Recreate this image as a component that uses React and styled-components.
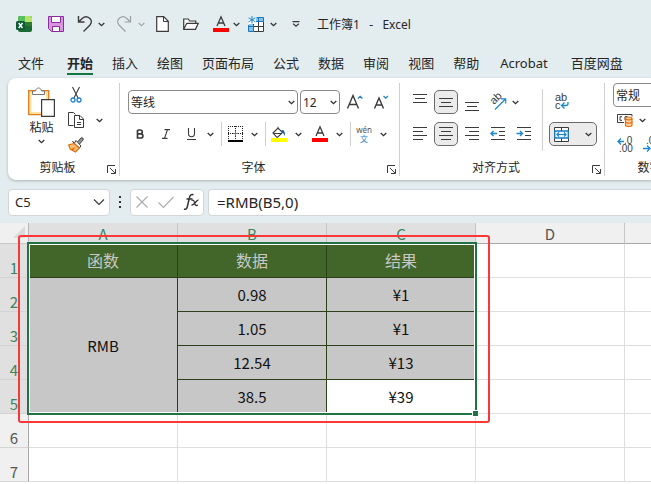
import React from "react";
import styled, { createGlobalStyle, css } from "styled-components";

const GlobalStyle = createGlobalStyle`
  * { box-sizing: border-box; }
  body {
    margin: 0;
    overflow: hidden;
    background: #e3ecef;
    color: #262626;
    font-family: "Noto Sans", "Noto Sans CJK SC", sans-serif;
    font-size: 12px;
  }
  button, input, select { font: inherit; color: inherit; }
  svg { display: block; flex: none; overflow: visible; }
`;

const Window = styled.div`
  display: flex;
  flex-direction: column;
  height: 100vh;
  overflow: hidden;
`;

const TitleBar = styled.header`
  display: flex;
  align-items: center;
  height: 48px;
  padding-left: 8px;
  flex: none;
`;

const Title = styled.h1`
  margin: 0 0 0 14px;
  font-size: 12px;
  font-weight: 400;
  white-space: pre;
`;

const Tool = styled.button`
  display: flex;
  align-items: center;
  justify-content: center;
  flex: none;
  width: ${(p) => p.$w || 24}px;
  height: 24px;
  padding: 0;
  border: 1px solid transparent;
  border-radius: 5px;
  background: none;
  font-size: 14px;
  ${(p) =>
    p.$pressed &&
    css`
      border-color: #6b6b6b;
      background: #ebebeb;
    `}
`;

const Drop = styled(Tool)`
  justify-content: flex-start;
  padding-left: ${(p) => p.$pad || 0}px;
  border: 0;
`;

const Tabs = styled.nav`
  display: flex;
  gap: 19px;
  height: 30px;
  padding-left: 18px;
  flex: none;
  white-space: nowrap;
`;

const Tab = styled.a`
  height: 27px;
  padding-top: 5px;
  line-height: 20px;
  font-size: 13px;
  color: #262626;
  text-decoration: none;
  &:first-child { margin-right: 4px; }
  &:nth-child(11) { margin: 0 4px 0 2px; }
  ${(p) =>
    p.$active &&
    css`
      font-weight: 700;
      border-bottom: 2px solid #13753f;
    `}
`;

const Ribbon = styled.section`
  display: flex;
  height: 102px;
  margin-left: 8px;
  padding: 5px 0 4px;
  flex: none;
  overflow: hidden;
  background: #fff;
  border-radius: 8px 0 0 8px;
  box-shadow: 0 1px 3px rgba(0, 0, 0, 0.25);
`;

const Group = styled.div`
  display: flex;
  flex-direction: column;
  flex: none;
  width: ${(p) => p.$w}px;
  border-right: 1px solid #d0d0d0;
`;

const GroupBody = styled.div`
  display: flex;
  flex: 1;
  min-height: 0;
`;

const GroupFooter = styled.div`
  display: flex;
  align-items: center;
  height: 16px;
  padding-right: 3px;
`;

const GroupName = styled.span`
  flex: 1;
  text-align: center;
  line-height: 16px;
`;

const Launcher = styled.button`
  padding: 3px 0 0;
  border: 0;
  background: none;
`;

const Paste = styled.button`
  display: flex;
  flex-direction: column;
  align-items: center;
  width: 39px;
  margin-left: 14px;
  padding: 4px 0 0;
  border: 0;
  background: none;
  line-height: 18px;
  gap: 2px;
`;

const ClipTools = styled.div`
  display: flex;
  flex-direction: column;
  align-items: flex-start;
  gap: 1px;
  padding: 0 0 0 3px;
`;

const Stack = styled.div`
  display: flex;
  flex-direction: column;
  gap: 8px;
  padding: 7px 0 0 ${(p) => p.$pad}px;
`;

const ToolRow = styled.div`
  display: flex;
  align-items: center;
  height: 24px;
  gap: ${(p) => p.$gap || 0}px;
`;

const Divider = styled.span`
  width: 1px;
  height: ${(p) => p.$h || 24}px;
  flex: none;
  background: #d0d0d0;
`;

const TallDivider = styled(Divider)`
  margin: 6px 6px 0;
`;

const SelectBox = styled.span`
  display: grid;
  align-items: center;
  width: ${(p) => p.$w}px;
  height: 24px;
  margin-right: 2px;
  flex: none;
  select, svg { grid-area: 1 / 1; }
  svg { justify-self: end; margin-right: 3px; pointer-events: none; }
`;

const Select = styled.select`
  appearance: none;
  width: 100%;
  height: 24px;
  padding: 0 0 0 2px;
  border: 1px solid #8a8a8a;
  border-radius: 4px;
  background: #fff;
`;

const NumberStack = styled.div`
  display: flex;
  flex-direction: column;
  gap: 1px;
  padding-left: 8px;
`;

const FormulaBar = styled.div`
  display: flex;
  align-items: center;
  height: 43px;
  padding: 1px 0 0 8px;
  flex: none;
`;

const BarBox = styled.div`
  display: flex;
  align-items: center;
  height: 27px;
  background: #fff;
  border: 1px solid #d2d6d8;
  border-radius: 4px;
`;

const NameBox = styled(BarBox)`
  width: 102px;
  padding-right: 4px;
`;

const FxBox = styled(BarBox)`
  width: 74px;
  justify-content: space-between;
  padding: 0 3px 0 4px;
`;

const FormulaBox = styled(BarBox)`
  flex: 1;
  margin-left: 4px;
  border-right: 0;
  border-radius: 4px 0 0 4px;
`;

const BarInput = styled.input`
  flex: 1;
  min-width: 0;
  width: 100%;
  padding: 0 0 0 ${(p) => p.$pad}px;
  border: 0;
  outline: 0;
  background: none;
  font-size: ${(p) => p.$size}px;
`;

const Dots = styled.span`
  display: flex;
  justify-content: center;
  width: 20px;
`;

const Plain = styled.button`
  padding: 0;
  border: 0;
  background: none;
`;

const Sheet = styled.main`
  position: relative;
  flex: 1;
  overflow: hidden;
  background: #fff;
`;

const Grid = styled.table`
  width: 100%;
  table-layout: fixed;
  border-collapse: separate;
  border-spacing: 0;
  font-family: "Noto Sans CJK SC", sans-serif;
  font-size: 15px;
  tr > :last-child { border-right: 0; }
`;

const Col = styled.col`
  width: ${(p) => p.$w}px;
`;

const Corner = styled.td`
  height: 21px;
  padding: 0 3px 3px 0;
  background: #f0f0f0;
  border-right: 1px solid #b5b5b5;
  border-bottom: 1px solid #c8c8c8;
  svg { margin-left: auto; }
`;

const ColHead = styled.th`
  height: 21px;
  padding: 2px 0 0;
  line-height: 18px;
  font-weight: 400;
  color: ${(p) => (p.$on ? "#3a8560" : "#555")};
  background: ${(p) => (p.$on ? "#e0e0e0" : "#f0f0f0")};
  border-right: 1px solid #c6c6c6;
  border-bottom: 1px solid #a8a8a8;
`;

const RowHead = styled.th`
  height: 34px;
  padding: 0;
  line-height: 18px;
  font-weight: 400;
  vertical-align: bottom;
  color: ${(p) => (p.$on ? "#3a8560" : "#555")};
  background: ${(p) => (p.$on ? "#e0e0e0" : "#f0f0f0")};
  border-right: 1px solid #a8a8a8;
  border-bottom: 1px solid #d4d4d4;
`;

const kinds = {
  blank: css`
    border-color: #dedede;
  `,
  head: css`
    padding-bottom: 2px;
    background: #42662a;
    color: #c8c8c8;
    font-size: 16px;
  `,
  picked: css`
    background: #c7c7c7;
  `,
  active: css`
    background: #fff;
  `,
};

const Cell = styled.td`
  height: 34px;
  padding: 0;
  line-height: 20px;
  text-align: center;
  color: #111;
  border: 0 solid #2d401b;
  border-width: 0 1px 1px 0;
  ${(p) => kinds[p.$kind]}
`;

const Selection = styled.div`
  position: absolute;
  left: 27px;
  top: 19px;
  width: 450px;
  height: 173px;
  border: 2px solid #217346;
  box-shadow: inset 0 0 0 1px #fff;
  pointer-events: none;
`;

const Handle = styled.span`
  position: absolute;
  right: -4px;
  bottom: -4px;
  width: 7px;
  height: 7px;
  background: #217346;
  border: 1px solid #fff;
`;

const Highlight = styled.div`
  position: absolute;
  left: 18px;
  top: 12px;
  width: 472px;
  height: 188px;
  border: 2px solid #fb3838;
  border-radius: 3px;
  pointer-events: none;
`;

const Svg = ({ w = 16, h = 16, children, ...rest }) => (
  <svg width={w} height={h} viewBox={`0 0 ${w} ${h}`} fill="none" stroke="#3b3b3b" aria-hidden="true" {...rest}>
    {children}
  </svg>
);

const Letters = styled.text`
  font-family: "Liberation Sans", sans-serif;
  font-size: ${(p) => p.$size || 10}px;
  fill: #3b3b3b;
  stroke: none;
`;

const Chevron = ({ color = "#333" }) => (
  <Svg w={7} h={5} stroke={color} strokeWidth="1.3"><path d="M.7 1l2.8 2.7L6.3 1" /></Svg>
);

const ExcelIcon = () => (
  <Svg stroke="none">
    <rect x="2" y="0" width="14" height="16" rx="2" fill="#1b6a34" />
    <path d="M4 0h5v6H2V2a2 2 0 012-2z" fill="#58c05c" />
    <path d="M9 0h5a2 2 0 012 2v4H9z" fill="#b4e36c" />
    <path d="M9 6h7v4H9z" fill="#2f7d2b" />
    <rect x="0" y="5" width="9" height="9" rx="1.5" fill="#0d5c37" />
    <path d="M2.7 7l3.8 5M6.5 7l-3.8 5" stroke="#fff" strokeWidth="1.4" />
  </Svg>
);
const SaveIcon = () => (
  <Svg stroke="#8c2b9c">
    <path d="M.5.5h15v15h-12l-3-3z" fill="#d896df" />
    <path d="M3.5.5h9v6h-9z" fill="#fff" /><path d="M4.500 15.500v-5h7v5z" fill="#fff" />
  </Svg>
);
const UndoIcon = () => (
  <Svg strokeWidth="1.4"><path d="M1.500 0v6h6M1.500 6L5.500 2.200C10-1.700 17.500 4 13 9L6.500 15.500" /></Svg>
);
const RedoIcon = () => (
  <Svg strokeWidth="1.2" stroke="#9aa0a3"><path d="M14.500 0v6h-6M14.500 6l-4-3.800C6-1.700-1.500 4 3 9l6.500 6.500" /></Svg>
);
const DocIcon = () => (
  <Svg w={13}><path d="M.7.7h7l4.600 4.600v10H.7z" fill="#fff" strokeWidth="1.2" /><path d="M7.500 1v4.500H12" /></Svg>
);
const FolderIcon = () => (
  <Svg h={12}><path d="M.7 11V1h4.500l1.500 2h6v2.200M.7 11.200L3.800 5.300h11.400l-2.700 6H.7z" strokeWidth="1.2" fill="#fafafa" /></Svg>
);
const FontColorIcon = () => (
  <Svg><path d="M4 10L8 .8 12 10M5.300 7h5.400" strokeWidth="1.3" /><path d="M0 12h16v4H0z" fill="#f00" stroke="none" /></Svg>
);
const TableIcon = () => (
  <Svg>
    <path d="M1 4h14v11H1z" fill="#fff" stroke="none" />
    <path d="M8 1h7v4H8z" fill="#86c3ea" stroke="none" /><path d="M1 8h5v7H1z" fill="#86c3ea" stroke="none" />
    <path d="M6 15.500h9.500V5.500M10.500 5v10.500M6 10.500h9.500M5.500 8v7.500" />
    <path d="M9 1.500h6.500v4H8M10.500 1.500v4M.5 9v6.500h5V9M.5 10.500h5" stroke="#1a75b8" />
    <path d="M4 0v7.500M.7 1.800l6.600 4M7.300 1.800l-6.600 4" stroke="#2287cf" />
  </Svg>
);
const CustomizeIcon = () => (
  <Svg w={8} h={6} strokeWidth="1.200"><path d="M.5.6h7M1.200 2.700L4 5.200l2.800-2.500" /></Svg>
);
const PasteIcon = () => (
  <Svg w={27} h={30}>
    <path d="M.7 3.700h20v24H.7z" fill="#ffe1a0" stroke="#e07b1f" strokeWidth="1.300" />
    <path d="M3.500 6h14.500v19H3.500z" fill="#fff" stroke="none" />
    <path d="M4.500 7.500V4h3c.5-4 5.500-4 6 0h3v3.500z" fill="#fff" stroke="#777" />
    <path d="M13.600 12.600h12.800v16.800H13.600z" fill="#fff" strokeWidth="1.200" />
  </Svg>
);
const CutIcon = () => (
  <Svg w={12}>
    <path d="M2.500 0l5.800 11.500M9.500 0L3.700 11.500" strokeWidth="1.100" />
    <circle cx="3" cy="13" r="2" stroke="#2082c9" strokeWidth="1.300" /><circle cx="9" cy="13" r="2" stroke="#2082c9" strokeWidth="1.300" />
  </Svg>
);
const CopyIcon = () => (
  <Svg>
    <path d="M5.500 13.500h-5V.5h5l2 2" />
    <path d="M6.500 3.500h5.500l3.500 3.500v8.500h-9z" fill="#fff" /><path d="M11.500 3.500v4h4M9 10.500h4M9 12.500h4" />
  </Svg>
);
const BrushIcon = () => (
  <Svg>
    <path d="M9.500 5L13 1c1-1 3 .5 2 2l-3.500 4" fill="#999" />
    <path d="M4.500 4.500l7 6.500 1.500-2L8 3.500 6.500 6z" fill="#fff" />
    <path d="M6 6.500L.7 8l1.600 4.300L7.500 15l3.700-4z" fill="#ffbf72" stroke="#df7116" strokeWidth="1.200" />
    <path d="M3 12l4.500-2L5 14z" fill="#df7116" stroke="none" />
  </Svg>
);
const LaunchIcon = () => (
  <Svg w={9} h={9}><path d="M.5 8V.5H8M3 3l5 5M8.500 4v4.500H4" /></Svg>
);
const GrowIcon = ({ down }) => (
  <Svg>
    <path d={down ? "M1.500 14.500L6 4l4.500 10.500M3.300 11h5.400" : "M.5 14.500L6 1.500l5.500 13M2.500 10.500h7"} strokeWidth="1.400" />
    <path d={down ? "M10.500 2l2.200 2.200L15 2" : "M11 4.500l2.200-2.200L15.400 4.500"} stroke="#2082c9" strokeWidth="1.300" />
  </Svg>
);
const BIcon = () => (
  <Svg w={8} h={10}><path d="M1.500 1h2.700C7 1 7 4.800 4.200 4.800H1.500M1.500 4.800h3C7.700 4.800 7.700 9 4.500 9h-3V1" strokeWidth="1.700" /></Svg>
);
const IIcon = () => (
  <Svg w={8} h={10}><path d="M2.500.6H8M0 9.400h5.500M5.500.6l-3 8.800" strokeWidth="1.100" /></Svg>
);
const UIcon = () => (
  <Svg w={9} h={12}><path d="M1.500 0v5.500c0 4.300 6 4.300 6 0V0M0 11.500h9" strokeWidth="1.100" /></Svg>
);
const BorderIcon = () => (
  <Svg w={15} h={16}>
    <path d="M0 .5h15M.5 0v14M14.500 0v14M7.500 0v14M0 7.500h15" strokeDasharray="1 1" stroke="#222" />
    <path d="M5 7.500h5M7.500 5v5" stroke="#777" /><path d="M0 15h15" stroke="#000" strokeWidth="2" />
  </Svg>
);
const FillIcon = () => (
  <Svg>
    <path d="M2 7l5-5 4.500 4.500-4.500 4.300c-.5.500-1 .5-1.500 0zM7 2.500V.7M2.500 7.500h8" strokeWidth="1.100" />
    <path d="M10.500 4c2-.5 3.800 1 3.500 6-1-1-1.500-3-3-3.500z" fill="#20659b" stroke="none" />
    <path d="M0 12h16v4H0z" fill="#ff0" stroke="none" />
  </Svg>
);

const Phonetic = styled.span`
  display: flex;
  flex-direction: column;
  align-items: center;
  font-size: 8px;
  line-height: 8px;
  color: #555;
`;
const PhoneticHan = styled.span`
  color: #2082c9;
  line-height: 9px;
`;

const LINES = [[1, 3], [3, 7], [1, 11]];
const shift = { top: -3, middle: 1, bottom: 5 };
const VAlignIcon = ({ at }) => (
  <Svg h={22}>
    {LINES.map(([x, y]) => (
      <path key={y} d={`M${x} ${y + shift[at] + 3.5}h${16 - 2 * x}`} strokeWidth="1.100" />
    ))}
  </Svg>
);
const HAlignIcon = ({ at }) => {
  const x = { left: 1, center: 3, right: 5 }[at];
  return (
    <Svg h={14}><path d={`M1 .5h14M${x} 4.500h10M1 8.500h14M${x} 12.500h10`} strokeWidth="1.100" /></Svg>
  );
};
const IndentIcon = ({ more }) => (
  <Svg h={14}>
    <path d="M1 .5h14M9 4.500h6M9 8.500h6M1 12.500h14" strokeWidth="1.100" />
    <path d={more ? "M.5 6.500h6M4 4l2.500 2.500L4 9" : "M7 6.500H1M3.500 4L1 6.500 3.500 9"} stroke="#1c86d1" strokeWidth="1.400" />
  </Svg>
);
const OrientIcon = () => (
  <Svg w={16}>
    <Letters $size={11} transform="translate(4 11) rotate(-45)">ab</Letters>
    <path d="M5 15.500L15.500 5M11 4.800h4.700V9.500" stroke="#1c86d1" strokeWidth="1.200" />
  </Svg>
);
const WrapIcon = () => (
  <Svg>
    <Letters $size={11} x="1" y="7">ab</Letters>
    <Letters $size={11} x="1" y="15">c</Letters>
    <path d="M14 8v1.500c0 1.500-.8 2-2 2H7.500M10.500 8.500l-3 3 3 3" stroke="#1c86d1" strokeWidth="1.300" />
  </Svg>
);
const MergeIcon = () => (
  <Svg w={15} h={15}>
    <path d="M.5.500h14v14H.5zM7.500 0v4M7.500 11v4" fill="#fff" />
    <path d="M.7 4h13.600v7H.7z" fill="#e8f5ff" stroke="#1a78bd" strokeWidth="1.300" />
    <path d="M3 7.500h9M5 5.500l-2 2 2 2M10 5.500l2 2-2 2" stroke="#1c86d1" strokeWidth="1.200" />
  </Svg>
);
const MoneyIcon = () => (
  <Svg h={14}>
    <path d="M7 9.500H.5v-8h14.500v2M5 3.700H3v3.600h2M8 7V3.700h2.500" />
    <path d="M8.500 5.500v6.500c0 2 6.500 2 6.500 0V5.500c0-2-6.500-2-6.500 0z" fill="#ffd09b" stroke="#df7116" strokeWidth="1.200" />
    <path d="M8.500 5.500c0 1.800 6.500 1.800 6.500 0M8.500 8.700c0 1.800 6.500 1.800 6.500 0" stroke="#df7116" strokeWidth="1.200" />
  </Svg>
);
const DecimalIcon = ({ less }) => (
  <Svg w={16} h={16}>
    <Letters x={less ? 7 : 3} y="7">{less ? ".0" : ".00"}</Letters>
    <Letters x={less ? 2 : 8} y="15">{less ? ".00" : ".0"}</Letters>
    <path d={less ? "M7 4.500H1M4 1.500l-3 3 3 3" : "M0 11.500h7M4 8.500l3 3-3 3"} stroke="#1c86d1" strokeWidth="1.300" />
  </Svg>
);

const DropTool = ({ w, pad, label, color }) => (
  <Drop $w={w} $pad={pad} aria-label={label}><Chevron color={color} /></Drop>
);

const Picker = ({ w, label, value }) => (
  <SelectBox $w={w}>
    <Select aria-label={label} defaultValue={value}><option>{value}</option></Select>
    <Chevron />
  </SelectBox>
);

const Footer = ({ name }) => (
  <GroupFooter>
    <GroupName>{name}</GroupName>
    <Launcher aria-label={`${name}设置`}><LaunchIcon /></Launcher>
  </GroupFooter>
);

const TABS = ["文件", "开始", "插入", "绘图", "页面布局", "公式", "数据", "审阅", "视图", "帮助", "Acrobat", "百度网盘"];
const ROWS = [
  ["函数", "数据", "结果"],
  ["RMB", "0.98", "¥1"],
  [null, "1.05", "¥1"],
  [null, "12.54", "¥13"],
  [null, "38.5", "¥39"],
  ["", "", ""],
  ["", "", ""],
];

const cellKind = (row, col) => {
  if (row > 4) return "blank";
  if (row === 0) return "head";
  return row === 4 && col === 2 ? "active" : "picked";
};

export default function App() {
  return (
    <Window>
      <GlobalStyle />
      <TitleBar>
        <Tool $w={32} aria-label="Excel"><ExcelIcon /></Tool>
        <Tool $w={32} aria-label="保存"><SaveIcon /></Tool>
        <Tool $w={26} aria-label="撤消"><UndoIcon /></Tool>
        <DropTool w={12} label="撤消列表" />
        <Tool $w={28} aria-label="恢复"><RedoIcon /></Tool>
        <DropTool w={14} label="恢复列表" color="#a5abae" />
        <Tool $w={21} aria-label="新建"><DocIcon /></Tool>
        <Tool $w={36} aria-label="打开"><FolderIcon /></Tool>
        <Tool $w={24} aria-label="字体颜色"><FontColorIcon /></Tool>
        <DropTool w={9} label="字体颜色列表" />
        <Tool $w={28} aria-label="表格"><TableIcon /></Tool>
        <DropTool w={19} label="表格列表" />
        <Tool $w={14} aria-label="自定义快速访问工具栏"><CustomizeIcon /></Tool>
        <Title>{"工作簿1   -   Excel"}</Title>
      </TitleBar>

      <Tabs>
        {TABS.map((t, i) => (
          <Tab key={t} href="#" $active={i === 1}>{t}</Tab>
        ))}
      </Tabs>

      <Ribbon>
        <Group $w={112}>
          <GroupBody>
            <Paste><PasteIcon /><span>粘贴</span><Chevron /></Paste>
            <ClipTools>
              <Tool aria-label="剪切"><CutIcon /></Tool>
              <ToolRow>
                <Tool aria-label="复制"><CopyIcon /></Tool>
                <DropTool w={18} pad={8} label="复制选项" />
              </ToolRow>
              <Tool aria-label="格式刷"><BrushIcon /></Tool>
            </ClipTools>
          </GroupBody>
          <Footer name="剪贴板" />
        </Group>

        <Group $w={280}>
          <GroupBody>
            <Stack $pad={8}>
              <ToolRow>
                <Picker w={170} label="字体" value="等线" />
                <Picker w={40} label="字号" value="12" />
                <Tool $w={26} aria-label="增大字号"><GrowIcon /></Tool>
                <Tool $w={26} aria-label="减小字号"><GrowIcon down /></Tool>
              </ToolRow>
              <ToolRow>
                <Tool aria-label="加粗"><BIcon /></Tool>
                <Tool $w={28} aria-label="倾斜"><IIcon /></Tool>
                <Tool $w={23} aria-label="下划线"><UIcon /></Tool>
                <DropTool w={18} pad={4} label="下划线选项" />
                <Divider />
                <Tool $w={27} aria-label="边框"><BorderIcon /></Tool>
                <DropTool w={16} pad={2} label="边框选项" />
                <Divider />
                <Tool $w={26} aria-label="填充颜色"><FillIcon /></Tool>
                <DropTool w={16} pad={3} label="填充颜色选项" />
                <Tool $w={24} aria-label="字体颜色"><FontColorIcon /></Tool>
                <DropTool w={18} pad={4} label="字体颜色选项" />
                <Divider />
                <Tool $w={26} aria-label="拼音"><Phonetic>wén<PhoneticHan>文</PhoneticHan></Phonetic></Tool>
                <DropTool w={17} pad={3} label="拼音选项" />
              </ToolRow>
            </Stack>
          </GroupBody>
          <Footer name="字体" />
        </Group>

        <Group $w={205}>
          <GroupBody>
            <Stack $pad={8}>
              <ToolRow $gap={2}>
                <Tool aria-label="顶端对齐"><VAlignIcon at="top" /></Tool>
                <Tool $pressed aria-label="垂直居中"><VAlignIcon at="middle" /></Tool>
                <Tool aria-label="底端对齐"><VAlignIcon at="bottom" /></Tool>
                <Tool aria-label="方向"><OrientIcon /></Tool>
                <DropTool w={18} label="方向选项" />
              </ToolRow>
              <ToolRow $gap={2}>
                <Tool aria-label="左对齐"><HAlignIcon at="left" /></Tool>
                <Tool $pressed aria-label="居中"><HAlignIcon at="center" /></Tool>
                <Tool aria-label="右对齐"><HAlignIcon at="right" /></Tool>
                <Tool aria-label="减少缩进"><IndentIcon /></Tool>
                <Tool aria-label="增加缩进"><IndentIcon more /></Tool>
              </ToolRow>
            </Stack>
            <TallDivider $h={62} />
            <Stack $pad={0}>
              <Tool $w={26} aria-label="自动换行"><WrapIcon /></Tool>
              <ToolRow>
                <Tool $w={48} $pressed aria-label="合并后居中">
                  <ToolRow as="span" $gap={16}><MergeIcon /><Chevron /></ToolRow>
                </Tool>
              </ToolRow>
            </Stack>
          </GroupBody>
          <Footer name="对齐方式" />
        </Group>

        <Group $w={102}>
          <GroupBody>
            <NumberStack>
              <Picker w={90} label="数字格式" value="常规" />
              <ToolRow $gap={2}>
                <Tool aria-label="会计数字格式"><MoneyIcon /></Tool>
                <DropTool w={18} label="会计数字格式选项" />
              </ToolRow>
              <ToolRow $gap={2}>
                <Tool aria-label="增加小数位数"><DecimalIcon less /></Tool>
                <Tool aria-label="减少小数位数"><DecimalIcon /></Tool>
              </ToolRow>
            </NumberStack>
          </GroupBody>
          <Footer name="数字" />
        </Group>
      </Ribbon>

      <FormulaBar>
        <NameBox>
          <BarInput $pad={6} $size={13} aria-label="名称框" defaultValue="C5" />
          <Plain aria-label="名称列表">
            <Svg w={12} h={8} strokeWidth="1.200"><path d="M1 1.500l5 5 5-5" /></Svg>
          </Plain>
        </NameBox>
        <Dots>
          <Svg w={2} h={12} stroke="none" fill="#333"><path d="M0 0h2v2H0zM0 5h2v2H0zM0 10h2v2H0z" /></Svg>
        </Dots>
        <FxBox>
          <Plain aria-label="取消"><Svg w={14} h={14} stroke="#adadad" strokeWidth="1.200"><path d="M1.500 1.500l11 11M12.500 1.500l-11 11" /></Svg></Plain>
          <Plain aria-label="输入"><Svg w={16} h={14} stroke="#adadad" strokeWidth="1.200"><path d="M.5 7.500l5 5L15.500 2" /></Svg></Plain>
          <Plain aria-label="插入函数">
            <Svg w={17} h={18} stroke="#333">
              <path d="M1 16c2 1 3-.5 3.500-3L6.500 4.500C7 2 8.500 1 10.500 1.800M3.500 6h6" strokeWidth="1.500" />
              <path d="M8.500 7.500c2-1 2.500 0 3 2s1 4 3.500 2.500M15.500 7.200c-2-.7-4 5.300-7 4.800" strokeWidth="1.300" />
            </Svg>
          </Plain>
        </FxBox>
        <FormulaBox>
          <BarInput $pad={8} $size={15} aria-label="编辑栏" defaultValue="=RMB(B5,0)" />
        </FormulaBox>
      </FormulaBar>

      <Sheet>
        <Grid>
          <colgroup>
            <Col $w={29} /><Col $w={149} /><Col $w={149} /><Col $w={149} /><Col $w={149} /><col />
          </colgroup>
          <thead>
            <tr>
              <Corner><Svg w={12} h={12} stroke="none"><path d="M12 0v12H0z" fill="#dadada" /></Svg></Corner>
              {["A", "B", "C", "D", ""].map((c, i) => (
                <ColHead key={i} $on={i < 3}>{c}</ColHead>
              ))}
            </tr>
          </thead>
          <tbody>
            {ROWS.map((row, r) => (
              <tr key={r}>
                <RowHead $on={r < 5}>{r + 1}</RowHead>
                {row.map((v, c) =>
                  v === null ? null : (
                    <Cell key={c} $kind={cellKind(r, c)} rowSpan={v === "RMB" ? 4 : 1}>{v}</Cell>
                  )
                )}
                <Cell $kind="blank" /><Cell $kind="blank" />
              </tr>
            ))}
          </tbody>
        </Grid>
        <Selection><Handle /></Selection>
        <Highlight />
      </Sheet>
    </Window>
  );
}
